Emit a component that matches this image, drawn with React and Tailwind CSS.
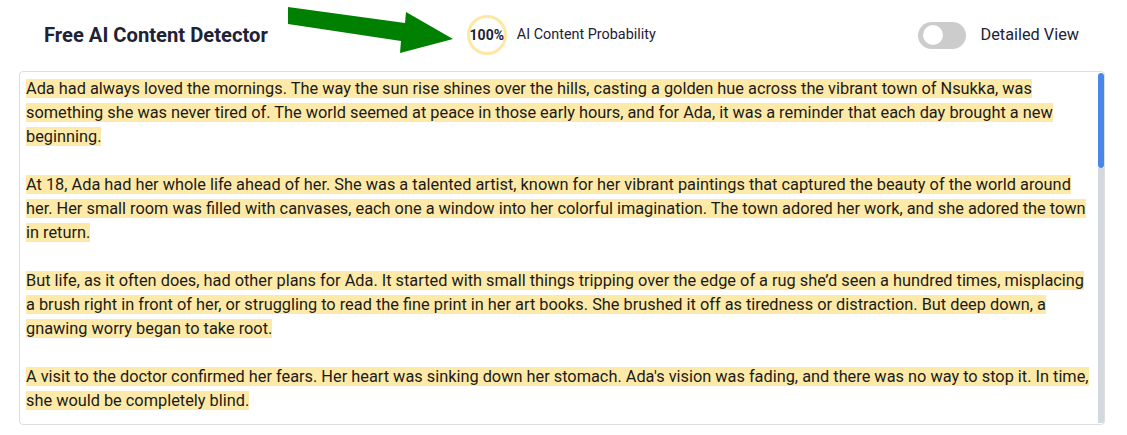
import React from "react";

const paragraphs = [
  "Ada had always loved the mornings. The way the sun rise shines over the hills, casting a golden hue across the vibrant town of Nsukka, was something she was never tired of. The world seemed at peace in those early hours, and for Ada, it was a reminder that each day brought a new beginning.",
  "At 18, Ada had her whole life ahead of her. She was a talented artist, known for her vibrant paintings that captured the beauty of the world around her. Her small room was filled with canvases, each one a window into her colorful imagination. The town adored her work, and she adored the town in return.",
  "But life, as it often does, had other plans for Ada. It started with small things tripping over the edge of a rug she\u2019d seen a hundred times, misplacing a brush right in front of her, or struggling to read the fine print in her art books. She brushed it off as tiredness or distraction. But deep down, a gnawing worry began to take root.",
  "A visit to the doctor confirmed her fears. Her heart was sinking down her stomach. Ada's vision was fading, and there was no way to stop it. In time, she would be completely blind.",
];

export default function App() {
  return (
    <div
      className="relative w-[1127px] h-[435px] bg-white overflow-hidden"
      style={{ fontFamily: "Roboto, 'Liberation Sans', sans-serif" }}
    >
      {/* annotation arrow */}
      <svg
        className="absolute left-0 top-0 pointer-events-none"
        width="470"
        height="60"
        viewBox="0 0 470 60"
      >
        <polygon
          points="288,7 405,23 406,12 453,39 400,53 401,41 288,24"
          fill="#008000"
        />
      </svg>

      <header className="flex items-center h-[70px] pl-[44px] pr-[48px]">
        <h1 className="text-[20.2px] font-bold text-[#1e2235] leading-none">
          Free AI Content Detector
        </h1>
        <div className="flex items-center ml-[199px] gap-[10px]">
          <div className="w-[40px] h-[40px] rounded-full border-[3.5px] border-[#fde9a4] flex items-center justify-center">
            <span className="text-[14px] font-bold text-[#1e2235] whitespace-nowrap">
              100%
            </span>
          </div>
          <span className="text-[14.4px] text-[#1e2235]">AI Content Probability</span>
        </div>
        <div className="flex items-center ml-auto gap-[15px]">
          <div className="w-[48px] h-[27px] rounded-full bg-[#cccccc] flex items-center pl-[5px]">
            <div className="w-[20px] h-[20px] rounded-full bg-white" />
          </div>
          <span className="text-[16.3px] text-[#1e2235]">Detailed View</span>
        </div>
      </header>

      <div className="ml-[19px] mt-[1px] w-[1086px] h-[354px] border border-[#dedede] rounded-[4px] flex overflow-hidden">
        <div className="flex-1 pl-[6px] pr-[2px] pt-[5px] flex flex-col gap-[24px] text-[16.33px] leading-[24px] text-[#1a1a1a]">
          {paragraphs.map((p, i) => (
            <p key={i}>
              <span className="bg-[#feeaa8]">{p}</span>
            </p>
          ))}
        </div>
        <div className="w-[6px] flex flex-col pt-[1px] pb-[1px]">
          <div className="h-[95px] bg-[#4a86e8] rounded-[3px]" />
          <div className="flex-1 bg-[#d3d9df]" />
        </div>
      </div>
    </div>
  );
}
